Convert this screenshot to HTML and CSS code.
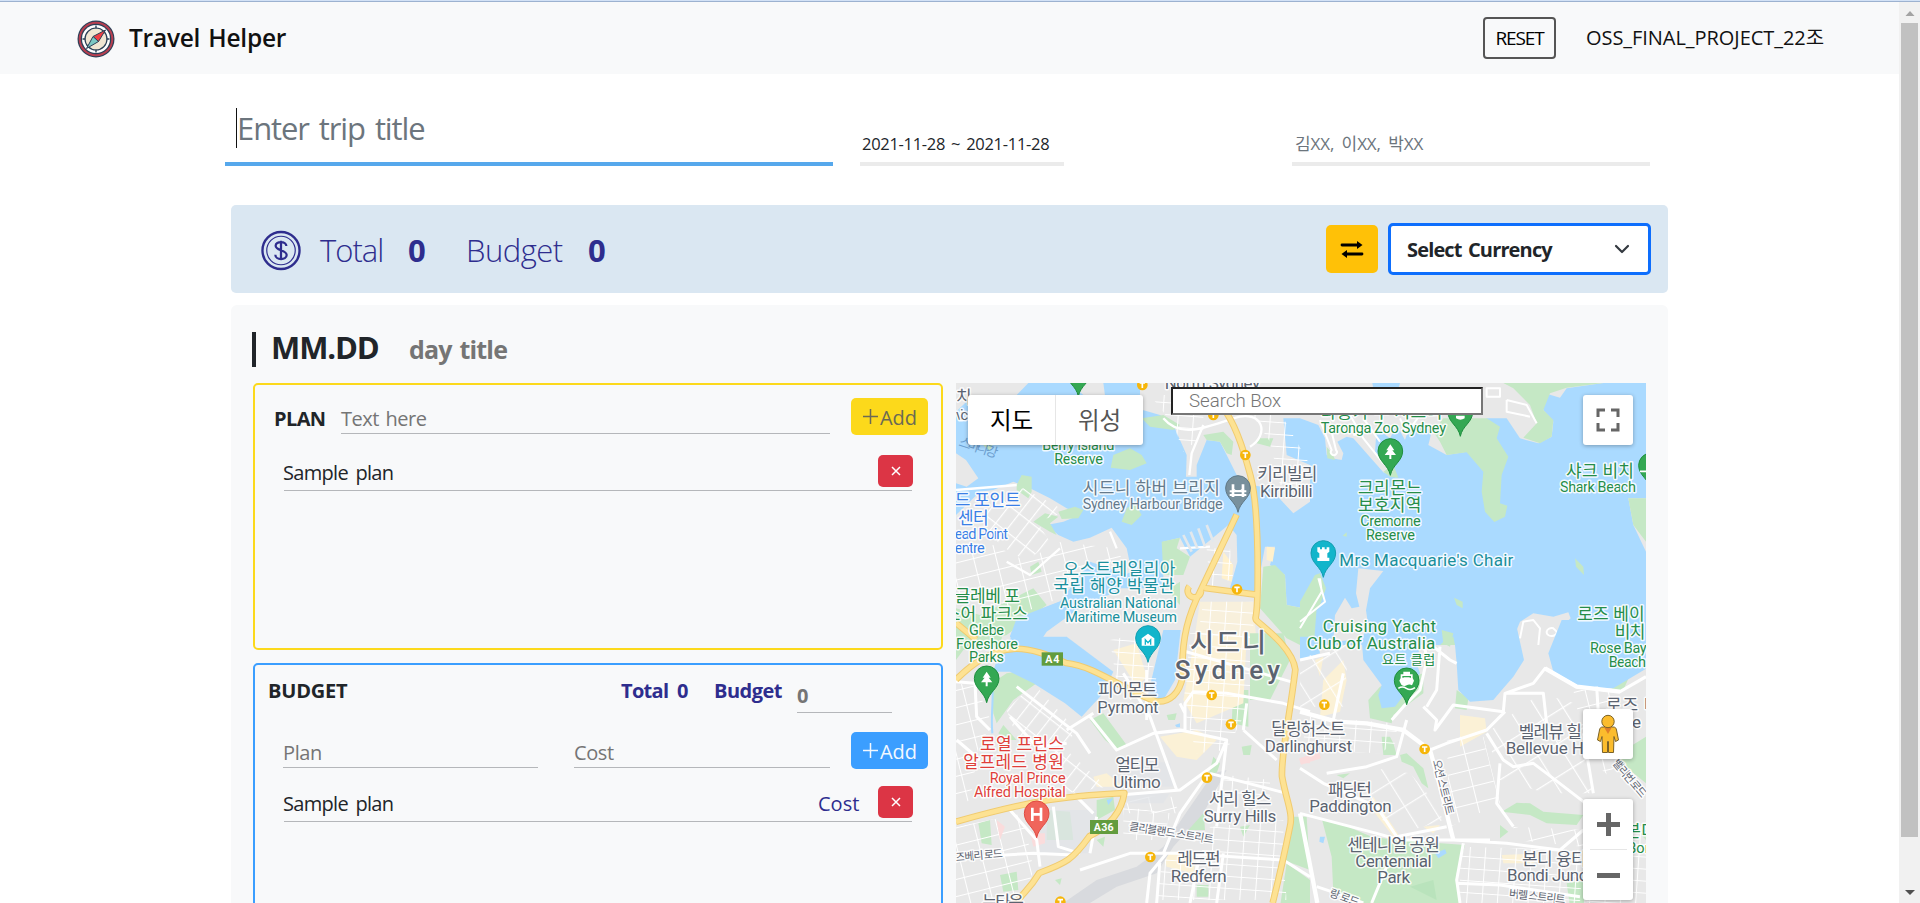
FILE: index.html
```html
<!DOCTYPE html>
<html lang="ko">
<head>
<meta charset="utf-8">
<title>Travel Helper</title>
<link rel="stylesheet" href="styles.css">
</head>
<body>
<div class="edge"></div>
<div class="window">
  <div class="page">
    <header class="navbar">
      <svg class="logo" viewBox="0 0 38 38">
        <circle cx="19" cy="19" r="18.5" fill="#2b4057"/><circle cx="19" cy="19" r="16.3" fill="none" stroke="#b83f50" stroke-width="2"/>
        <circle cx="19" cy="19" r="14" fill="#fff"/><circle cx="19" cy="19" r="11" fill="#f0e6d3" stroke="#2b4057" stroke-width="1.2"/>
        <path d="M19 5.500v3M19 29.500v3M5.500 19h3M29.500 19h3" stroke="#2b4057" stroke-width="1.4"/>
        <path d="M28.500 10 16 16.500 21.500 21.500Z" fill="#ee3e45" stroke="#2b4057" stroke-width="1"/>
        <path d="M9.500 28.500 16 16.500 21.500 21.500Z" fill="#7cc8c4" stroke="#2b4057" stroke-width="1"/>
      </svg>
      <span class="brand">Travel Helper</span>
      <button class="reset"><span>RESET</span></button>
      <span class="team">OSS_FINAL_PROJECT_22조</span>
    </header>

    <section class="trip">
      <div class="field trip-title"><i class="caret"></i><span>Enter trip title</span></div>
      <div class="field dates"><span>2021-11-28 ~ 2021-11-28</span></div>
      <div class="field members"><span>김XX, 이XX, 박XX</span></div>
    </section>

    <section class="summary">
      <svg class="coin" viewBox="0 0 41 41" fill="none" stroke="#2e2d8e">
        <circle cx="20.500" cy="20.500" r="19" stroke-width="2.400"/><circle cx="20.500" cy="20.500" r="14.600" stroke-width="1.200"/>
        <path d="M26 16c0-5.500-11-5.500-11-.4 0 5.300 11.300 4 11.300 9.600 0 5.500-11.600 5.500-11.600-.4M20.500 10.500v20" stroke-width="2.300"/>
      </svg>
      <span class="sum-label total">Total</span><b class="sum-value">0</b>
      <span class="sum-label budget-l">Budget</span><b class="sum-value">0</b>
      <button class="swap"><svg viewBox="0 0 24 24" width="24" height="24"><path d="M2 8h15M7 17h15" stroke="#000" stroke-width="2.800" stroke-linecap="round"/><path d="M17 4 22.500 8 17 12ZM7 13 1.500 17 7 21Z"/></svg></button>
      <div class="select"><b>Select Currency</b><svg width="16" height="10" viewBox="0 0 16 10"><path d="m2 2 6 6 6-6" fill="none" stroke="#343a40" stroke-width="2.200" stroke-linecap="round" stroke-linejoin="round"/></svg></div>
    </section>

    <section class="day">
      <div class="day-head"><i class="bar"></i><b class="date">MM.DD</b><b class="day-title">day title</b></div>
      <div class="columns">
        <div class="left">
          <div class="card plan">
            <div class="row entry">
              <b class="heading">PLAN</b>
              <div class="line text-here"><span>Text here</span></div>
              <button class="add yellow"><svg width="17" height="17"><path d="M8.500 1v15M1 8.500h15" stroke="currentColor" stroke-width="1.500"/></svg><span>Add</span></button>
            </div>
            <div class="row item"><span class="sample">Sample plan</span><button class="remove"><svg width="10" height="10"><path d="m1 1 8 8M9 1 1 9" stroke="#fff" stroke-width="1.500"/></svg></button></div>
          </div>
          <div class="card budget">
            <div class="row budget-head">
              <b class="heading">BUDGET</b><b class="t1">Total</b><b class="v1">0</b><b class="t2">Budget</b><div class="line amount"><b>0</b></div>
            </div>
            <div class="row entry2">
              <div class="line in-plan"><span>Plan</span></div>
              <div class="line in-cost"><span>Cost</span></div>
              <button class="add blue"><svg width="17" height="17"><path d="M8.500 1v15M1 8.500h15" stroke="currentColor" stroke-width="1.500"/></svg><span>Add</span></button>
            </div>
            <div class="row item second"><span class="sample">Sample plan</span><span class="cost">Cost</span><button class="remove"><svg width="10" height="10"><path d="m1 1 8 8M9 1 1 9" stroke="#fff" stroke-width="1.500"/></svg></button></div>
          </div>
        </div>

        <div class="map">
<svg class="tiles" viewBox="0 0 2070 1560" width="690" height="520">
<defs>
  <pattern id="ga" width="46" height="36" patternUnits="userSpaceOnUse" patternTransform="rotate(4)"><path d="M0 0H46M0 0V36" stroke="#fff" stroke-width="6"/></pattern>
  <pattern id="gb" width="38" height="66" patternUnits="userSpaceOnUse" patternTransform="rotate(38)"><path d="M0 0H38M0 0V66" stroke="#fff" stroke-width="7"/></pattern>
  <pattern id="gc" width="66" height="50" patternUnits="userSpaceOnUse" patternTransform="rotate(-14)"><path d="M0 0H66M0 0V50" stroke="#fff" stroke-width="6"/></pattern>
  <pattern id="gd" width="70" height="84" patternUnits="userSpaceOnUse" patternTransform="rotate(-32)"><path d="M0 0H70M0 0V84" stroke="#fff" stroke-width="7"/></pattern>
  <path id="pin" d="M0 0C-6-32-37-42-37-73A37 37 0 0 1 37-73C37-42 6-32 0 0Z"/>
  <g id="tt"><circle r="16" fill="#f6b60b"/><path d="M-8-6H8M0-6V9" stroke="#fff" stroke-width="5" fill="none"/></g>
  <path id="tree" d="M0-24-12-6h6L-17 8h14v12h6V8h14L6-6h6Z" fill="#fff"/>
</defs>
<rect width="2070" height="1560" fill="#aadaff"/>
<!-- land, north-west -->
<g transform="translate(-18 -24)">
  <g fill="#e8e8e8">
    <path d="M18 24H235L200 60 60 70 18 110ZM360 24H460L470 100H570V24H1060V60L1000 130 1010 240 1080 270V380L1030 415 960 340 905 330 860 300 830 240 810 200 770 195 740 270 740 305 708 305 710 240 670 150 630 120 560 100 500 60 400 60Z"/>
    <path d="M18 235 48 255 85 310 50 335 18 325ZM18 420 90 350 130 345 190 320 240 340 300 370 350 400 390 420 340 440 290 450 325 480 370 500 420 488 485 458 530 520 545 590 500 610 420 560 330 680 200 730 180 785 200 810H18Z"/>
    <path d="M290 770 470 640 640 640V500L690 488 720 545 835 450 860 480 862 560 840 640 920 650 945 515 975 515 960 570 1005 600 1010 690 1060 700 1090 660V830H250Z"/>
  </g>
  <g fill="#c5e8c5">
    <path d="M490 240 540 220 575 240 590 265 540 285 482 278ZM200 330 215 300 245 305 245 350 235 370 200 345ZM250 440 285 415 325 425 300 445 320 480 300 470ZM325 410 375 395 400 405 385 430 335 432ZM530 400 555 385 575 420 545 450 515 440ZM635 500 690 488 680 520 720 545 700 600 640 600ZM940 575 975 570 1005 600 1010 690 1060 700 1080 660 1100 700 1090 830 1010 790 930 700ZM90 200 135 185 120 230ZM575 130 640 120 690 150 670 165 600 155ZM930 190 970 190 960 215 920 205ZM760 180 820 170 850 200 845 240 830 235 810 200 770 195ZM240 575 265 560 275 590 245 600ZM660 640 690 620 690 690 670 670Z"/>
    <path d="M18 700 90 720 250 640 290 690 170 780 60 810H18Z"/>
  </g>
  <path d="M180 785 200 730 340 675 420 560 540 600 500 650 400 690 300 760 230 810Z" fill="#aadaff"/>
  <path d="M950 515 975 518 968 560 950 555ZM820 530 850 570 845 620 815 610Z" fill="#fff1cd"/>
  <path d="M750 680 910 680 920 810H730Z" fill="#f8f0dc"/>
  <path d="M120 370 220 340 350 410 260 440 300 500 230 560 150 510 100 440Z" fill="url(#gb)"/>
  <path d="M18 540 130 510 230 560 320 500 500 520 520 560 420 560 330 670 200 720 100 640 18 680Z" fill="url(#gc)"/>
  <path d="M600 60H760V180L700 230 670 150ZM860 50H1000V130L1080 270V350L990 330 960 200Z" fill="url(#ga)"/>
  <path d="M770 520H840L850 610 780 640ZM760 680H910V810H740Z" fill="url(#ga)"/>
  <g fill="none" stroke="#fff" stroke-width="7" stroke-linejoin="round"><path d="M640 130C690 190 760 160 850 130S960 180 900 215M718 300 725 235 760 150M690 520 780 515M480 470 500 520M170 560 240 600 330 520M18 345 200 330"/></g>
  <path d="M700 480 725 530M722 470 742 520M745 460 765 515M770 450 790 500" stroke="#e3e8ec" stroke-width="8"/>
</g>
<!-- land, north-east -->
<g transform="translate(1032 -24)">
  <g fill="#e8e8e8">
    <path d="M-60 24H910L800 40 780 68 720 50 730 105 760 140 755 185 715 205 660 190 620 130 560 130 500 230 440 240 385 210 395 170 370 150 330 150 315 195 290 150 270 190 230 160 225 230 270 285 290 308 250 292 160 190 140 185 112 200 130 235 125 255 95 250 80 240 75 190 55 150 0 130H-60Z"/>
    <path d="M985 370H1038V530L1000 450ZM175 580 250 588 210 640 198 706 210 790 100 800 105 720 135 668 155 700 178 695 168 655ZM640 790 660 740 700 715 760 725 805 712 812 730 780 760 785 830H650Z"/>
  </g>
  <g fill="#c5e8c5">
    <path d="M610 24H910L800 38 750 55 730 105 760 135 755 185 720 205 670 188 710 145 690 90 640 40ZM400 170 430 130 560 130 600 155 590 190 625 245 605 300 600 385 622 392 615 425 583 441 555 410 545 350 550 290 500 232 440 240 420 200ZM985 370H1038V500L1000 450ZM60 595 78 640 60 690 0 740V680L45 600ZM825 550 850 575 852 600 828 575ZM462 668 488 680 488 700 470 690ZM128 482 140 472 140 485ZM80 215 100 240 105 255 82 250ZM430 800 460 785 470 830 400 830ZM250 290 280 270 295 308 270 305Z"/>
  </g>
  <path d="M217 24H300L290 60 220 40Z" fill="#aadaff"/>
  <g fill="none" stroke="#fff" stroke-width="6" stroke-linejoin="round"><path d="M95 80 100 140M60 135 95 225A9 9 0 1 0 108 225L90 150M150 120 190 190 250 265M190 130 240 200M160 180 210 170M560 40H600V65H560ZM620 75 680 90 710 145M620 75V110L690 125M660 790 670 740 700 735 720 760 715 810M760 760A15 12 0 1 0 770 770ZM55 610 75 680 0 740M60 610 65 650 0 760M0 110 160 120M300 130 320 175 360 120"/></g>
</g>
<!-- land, south -->
<rect x="0" y="786" width="2070" height="774" fill="#e8e8e8"/>
<g transform="translate(-18 771)">
  <g fill="#c5e8c5">
    <path d="M18-30H160L150 20 40 30 18 60ZM125 130 170 100 235 90 260 130 190 180 140 250 130 220ZM420 240 460 220 530 315 500 328 465 300ZM145 280 160 255 200 300 170 300ZM290 510 360 515 370 600 290 600ZM440 480 490 470 495 510 440 540ZM85 550 120 540 125 615 95 610ZM150 705 200 695 205 750 160 755ZM440 600 465 590 460 620ZM650 225 680 220 675 240 655 240ZM790 350 810 370 800 400 775 410ZM850 150 895 150 895 260 845 250ZM900-20 1000-20 1020 60 960 180 900 180ZM700 570 760 500 765 570ZM870 560 900 555 880 590ZM1030 530 1070 530 1080 690 1000 660ZM1010 670 1080 720V800H990ZM740 735 775 735 775 770 740 770ZM315 720 335 715 330 735ZM875 320 905 315 900 345 880 345Z"/>
  </g>
  <path d="M185-10 350-10 490 95 455 165 395 230 345 190 250 130 180 95H130L140 60Z" fill="#aadaff"/>
  <path d="M350 100 400 140M590 180 640-30H692L675 120 640 180ZM675 255 690 250 690 262 680 262ZM470 480 490 475 475 495Z" fill="#aadaff"/>
  <path d="M735-10H890L880 190 740 250 700 180ZM630 290 740 270 800 300 740 360 680 350ZM490 30 560 10 590 110 560 140ZM640 640 740 640 730 700 650 680ZM430 410 470 400 520 440 440 440Z" fill="#fbf1d6"/>
  <path d="M480 0 580-20 620 110 600 180 540 180 500 130ZM720-20H900V190L830 330 740 340 700 200ZM520 500 660 520 640 600 520 600ZM780 560 1000 540 1000 660 1010 780H620L640 640 750 650ZM780 400 960 420 960 480H790Z" fill="url(#ga)"/>
  <path d="M170 210 250 130 370 260 360 340 470 440 350 460 340 400 200 290Z" fill="url(#gb)"/>
  <path d="M18 130 80 140 130 260 90 300 60 480 18 500ZM18 560 220 520 250 690 220 789H18ZM520 470H680V520H520Z" fill="url(#gc)"/>
  <path d="M270 510H440L420 640 270 640ZM520 460H660L640 490H520ZM510 350 660 370 670 440H520Z" fill="#e1e4e8" opacity=".7"/>
  <path d="M340 789 440 720 560 680 640 620 700 530 790 400 830 390 760 520 670 620 620 700 500 740 420 789Z" fill="#d8dade"/>
  <path d="M140 540 165 560 150 600ZM240 580 285 580 285 610 250 620ZM1050 370 1080 350V370Z" fill="#fadcdc"/>
  <path d="M127 280C120 200 140 150 115 110" stroke="#aadaff" stroke-width="6" fill="none"/>
  <g fill="none" stroke="#fff" stroke-width="9" stroke-linejoin="round">
    <path d="M18 125 75 130 80 230 120 270M350 270 430 220M420 230 500 330 610 280 705 270V190L730 155 830 160 1000 190 1080 215M520 100 600 230 680 450M590 90V240M690 190 705 220M610 280 690 270 830 300 800 370 690 450 510 465M890 190 880 270M830 300 800 560M180 510 260 600 270 680M80 650 250 640 370 645M390 690 540 640 650 640 600 700 590 789M640 640 690 520 760 420M600 640 680 640 1000 660 1080 710M780 400 1010 460M310 500 325 620 390 640M440 530 420 640M370 460 430 520M180 230 260 320 350 310M690 30 1040 130M200 140 380 280 420 340M880 270 980 360M20 300 90 360M630 660 620 789M750 640 720 789M820 640 800 789"/>
  </g>
</g>
<g transform="translate(1032 771)">
  <g fill="#c5e8c5">
    <path d="M205 180 240 140 370 100 370 160 280 225 275 250 210 235ZM470 150 505 175 500 210 465 205ZM425-30 460-20 450 20 430 10ZM300 345 320 340 370 385 385 445 365 430 340 380 305 365ZM245 290 270 290 280 310 290 345 250 345ZM65 535 120 550 215 590 290 600 495 615 470 700 480 800H215L100 760 95 650ZM605 515 650 488 690 490 730 515 850 525 830 555 740 550 690 525ZM600 555 625 575 600 595ZM800 730 860 720 850 800H810ZM935 130 965 95 990 105 970 150H935ZM940 350 1038 290V430ZM110 405 150 400 130 415ZM1010 570 1038 570V600Z"/>
  </g>
  <path d="M330 740 400 720 410 780Z" fill="#b9e3bc"/>
  <path d="M185 0 200-40H370L350 70 360 100 285 200 245 205 235 165 245 135 190 60ZM460-40H650L672 60 640 110 610 145 580 180 510 185 475 150 470 70ZM785-60H1040V85L940 145H850L760 95 745 40ZM0-10 50-10 60 40 0 60ZM60 590 75 590 70 610 58 605ZM405 640 435 628 440 640 415 655Z" fill="#aadaff"/>
  <path d="M70 120 130 60 140 120 120 215 60 230ZM480 225 555 235 560 275 480 320ZM605 645 720 640 700 670 610 670ZM45 60 70 50 60 110ZM370 560 420 555 400 580ZM220 470 300 590 280 590 210 500Z" fill="#fbf1d6"/>
  <path d="M0 50 70 40 150-20 130 200 0 200ZM190 380 330 400 390 470 430 540 290 585 210 500Z" fill="url(#gd)" opacity=".9"/>
  <path d="M30 230 280 250 300 300 240 340 0 330ZM480 620 850 630 840 789H480ZM860 540 1038 560V789H860Z" fill="url(#ga)"/>
  <path d="M560 280 720 160 860 200 880 460 740 460 600 420Z" fill="url(#gd)"/>
  <path d="M440 290 550 290 600 490 450 560ZM640 560 860 570 850 620 640 600ZM820 150H940V420L860 350Z" fill="url(#gc)"/>
  <path d="M0 365 60 345" stroke="#fadcdc" stroke-width="20"/>
  <g fill="none" stroke="#fff" stroke-width="9" stroke-linejoin="round">
    <path d="M275 240 310 200 360 150 380 60 370-10M370 200 410 240 405 270 460 195 610 215 615 160 700 130 735 85 830 140 960 155 1038 110M615 215 560 270 440 310 390 330M400 20 450 60 470 70M380 200 410 150 420 20M615 160H730L740 250M560 280 610 360 640 380 700 370 740 400 870 500M320 240 290 350 200 380 80 400M0 385 70 430 230 500 290 590 440 560M0 60 90 40M130 100 100 240M890 140 900 300M460 600 620 610 780 630 850 570M300 600 470 600 570 600M490 610 470 720 480 789M470 730 600 735 840 770M0 520 230 580 300 600M50 740 110 760 190 789M260 680 215 789M850 280 880 460M600 370 590 490 640 560"/>
    <path d="M0 215 110 245 200 250 310 270 390 330 410 400 460 600M0 520 52 789M735 85 830 140 960 155" stroke-width="13"/>
  </g>
</g>
<!-- motorways -->
<g fill="none" stroke-linejoin="round">
  <path d="M812 90C850 150 870 230 884 280C902 350 906 480 905 600S895 700 900 710S1010 790 1018 860C1000 1010 975 1110 978 1180C990 1250 1012 1290 1002 1330C990 1390 975 1460 950 1560M842 395 735 620C700 690 675 760 680 880C672 930 640 960 600 955C500 920 420 850 330 840C220 790 130 760 0 890M745 615 900 635M700 610A20 20 0 1 0 735 625M0 1316C200 1260 300 1240 505 1230C495 1300 440 1340 400 1360C350 1430 330 1440 250 1470C220 1520 200 1530 180 1560M0 720 60 770" stroke="#f0cb70" stroke-width="20"/>
  <path d="M812 90C850 150 870 230 884 280C902 350 906 480 905 600S895 700 900 710S1010 790 1018 860C1000 1010 975 1110 978 1180C990 1250 1012 1290 1002 1330C990 1390 975 1460 950 1560M842 395 735 620C700 690 675 760 680 880C672 930 640 960 600 955C500 920 420 850 330 840C220 790 130 760 0 890M745 615 900 635M700 610A20 20 0 1 0 735 625M0 1316C200 1260 300 1240 505 1230C495 1300 440 1340 400 1360C350 1430 330 1440 250 1470C220 1520 200 1530 180 1560M0 720 60 770" stroke="#fde293" stroke-width="14"/>
</g>
<!-- labels and pins -->
<g class="lb" transform="translate(-18 -24)">
  <text x="18" y="84" class="k gray" textLength="34">치</text><text x="18" y="134" class="gray s" textLength="36">vic</text>
  <text x="644" y="42" class="l gray" textLength="286">North Sydney</text>
  <text x="24" y="212" class="river" transform="rotate(18 24 212)" textLength="120">스마나 강</text>
  <text x="277" y="226" class="s green" textLength="216">Berry Island</text><text x="313" y="266" class="s green" textLength="146">Reserve</text>
  <text x="398" y="358" class="k slate" textLength="412">시드니 하버 브리지</text><text x="398" y="403" class="s slate" textLength="420">Sydney Harbour Bridge</text>
  <text x="922" y="316" class="k gray" textLength="180">키리빌리</text><text x="930" y="366" class="l gray" textLength="158">Kirribilli</text>
  <text x="14" y="394" class="k blue" textLength="198">드 포인트</text><text x="24" y="446" class="k blue" textLength="92">센터</text><text x="14" y="493" class="s blue" textLength="160">ead Point</text><text x="14" y="534" class="s blue" textLength="90">entre</text>
  <text x="340" y="600" class="k teal" textLength="336">오스트레일리아</text><text x="310" y="652" class="k teal" textLength="364">국립 해양 박물관</text><text x="330" y="700" class="s teal" textLength="350">Australian National</text><text x="346" y="740" class="s teal" textLength="335">Maritime Museum</text>
  <text x="14" y="682" class="k green" textLength="196">글레베 포</text><text x="-16" y="734" class="k green" textLength="250">쇼어 파크스</text><text x="57" y="780" class="s green" textLength="105">Glebe</text>
</g>
<g class="lb" transform="translate(1032 -24)">
  <text x="62" y="130" class="k green" textLength="365">타롱가 주 시드니</text><text x="62" y="173" class="s green" textLength="376">Taronga Zoo Sydney</text>
  <text x="174" y="356" class="k green" textLength="192">크리몬느</text><text x="174" y="408" class="k green" textLength="190">보호지역</text><text x="181" y="454" class="s green" textLength="181">Cremorne</text><text x="198" y="495" class="s green" textLength="147">Reserve</text>
  <text x="118" y="573" class="l teal" textLength="522">Mrs Macquarie's Chair</text>
  <text x="798" y="306" class="k green" textLength="204">샤크 비치</text><text x="780" y="352" class="s green" textLength="228">Shark Beach</text>
  <text x="68" y="771" class="l green" textLength="340">Cruising Yacht</text><text x="20" y="822" class="l green" textLength="386">Club of Australia</text>
  <text x="832" y="736" class="k green" textLength="202">로즈 베이</text><text x="944" y="788" class="k green" textLength="92">비치</text>
</g>
<g class="lb" transform="translate(-18 771)">
  <text x="18" y="26" class="s green" textLength="186">Foreshore</text><text x="57" y="67" class="s green" textLength="105">Parks</text>
  <text x="720" y="36" class="kc gray" textLength="228">시드니</text><text x="674" y="116" class="city gray" textLength="316">Sydney</text>
  <text x="444" y="169" class="k gray" textLength="178">피어몬트</text><text x="442" y="220" class="l gray" textLength="184">Pyrmont</text>
  <text x="496" y="394" class="k gray" textLength="132">얼티모</text><text x="490" y="444" class="l gray" textLength="142">Ultimo</text>
  <text x="964" y="285" class="k gray" textLength="222">달링허스트</text><text x="944" y="335" class="l gray" textLength="262">Darlinghurst</text>
  <text x="776" y="496" class="k gray" textLength="188">서리 힐스</text><text x="761" y="545" class="l gray" textLength="218">Surry Hills</text>
  <text x="90" y="330" class="k red" textLength="252">로열 프린스</text><text x="40" y="384" class="k red" textLength="302">알프레드 병원</text><text x="119" y="430" class="s red" textLength="228">Royal Prince</text><text x="72" y="471" class="s red" textLength="275">Alfred Hospital</text>
  <text x="682" y="676" class="k gray" textLength="130">레드펀</text><text x="662" y="725" class="l gray" textLength="168">Redfern</text>
  <text x="536" y="570" class="ks gray" transform="rotate(9 536 570)" textLength="256">클리블랜드 스트리트</text>
  <text x="18" y="664" class="ks gray" transform="rotate(-5 18 664)" textLength="142">즈베리 로드</text>
  <text x="96" y="804" class="k gray" textLength="126">뉴타운</text>
</g>
<g class="lb" transform="translate(1032 771)">
  <text x="246" y="73" class="km green" textLength="160">요트 클럽</text>
  <text x="870" y="39" class="s green" textLength="170">Rose Bay</text><text x="926" y="80" class="s green" textLength="112">Beach</text>
  <text x="918" y="212" class="k gray" textLength="210">로즈 베이</text><text x="996" y="264" class="l gray" textLength="80">e B</text>
  <text x="656" y="294" class="k gray" textLength="190">벨레뷰 힐</text><text x="617" y="343" class="l gray" textLength="270">Bellevue Hill</text>
  <text x="84" y="468" class="k gray" textLength="132">패딩턴</text><text x="28" y="517" class="l gray" textLength="247">Paddington</text>
  <text x="142" y="632" class="k gray" textLength="278">센테니얼 공원</text><text x="166" y="681" class="l gray" textLength="229">Centennial</text><text x="232" y="729" class="l gray" textLength="98">Park</text>
  <text x="666" y="674" class="k gray" textLength="194">본디 융티</text><text x="621" y="722" class="l gray" textLength="242">Bondi Junc</text>
  <text x="398" y="362" class="ks gray" transform="rotate(76 398 362)" textLength="170">오션 스트리트</text>
  <text x="626" y="772" class="ks gray" transform="rotate(6 626 772)" textLength="170">버렐 스트리트</text>
  <text x="86" y="768" class="ks gray" transform="rotate(20 86 768)" textLength="92">랑 로드</text>
  <text x="936" y="370" class="ks gray" transform="rotate(50 936 370)" textLength="138">밸리번 로드</text>
  <text x="976" y="590" class="k green">본디</text><text x="982" y="640" class="s green">Bondi</text>
</g>
<g stroke-width="3">
  <g fill="#34a853" stroke="#1e8e3e"><use href="#pin" x="367" y="40"/><use href="#pin" x="1303" y="277"/><use href="#pin" x="1513" y="160"/><use href="#pin" x="2085" y="320"/><use href="#pin" x="92" y="959"/><use href="#pin" x="1352" y="965"/></g>
  <g fill="#12b5cb" stroke="#129eaf"><use href="#pin" x="1102" y="583"/><use href="#pin" x="576" y="838"/></g>
  <use href="#pin" x="846" y="388" fill="#78909c" stroke="#5f7886"/><use href="#pin" x="242" y="1364" fill="#f0655b" stroke="#e04a40"/>
</g>
<use href="#tree" x="1303" y="208"/><use href="#tree" x="92" y="890"/>
<path d="M1084 493h8v6h6v-6h8v6h6v-6h8v13l-6 5v13h6v10h-36v-10h6v-13l-6-5Z" fill="#fff"/>
<path d="M821 325h50M821 336h50" stroke="#fff" stroke-width="6"/><path d="M831 304v38M861 304v38" stroke="#fff" stroke-width="8"/><path d="M831 318Q846 330 861 318" stroke="#fff" stroke-width="4" fill="none"/>
<path d="M557 766 576 752 595 766V788H557ZM1500 98h26v8q-13 8-26 0ZM1330 893 1334 885V874h8v-8h20v8h8v11l4 8-6 14q-8-5-16 0t-16-2Z" fill="#fff"/><path d="M568 785V770L576 779 584 770V785" stroke="#12b5cb" stroke-width="4" fill="none"/><path d="M1341 884v-3h22v3" stroke="#34a853" stroke-width="4" fill="none"/><path d="M1327 916q12-8 24 0t26-2M2070 265h-18" stroke="#fff" stroke-width="5" fill="none"/>
<path d="M229 1274v40M255 1274v40M229 1294h26" stroke="#fff" stroke-width="8"/>
<use href="#tt" x="559" y="6"/><use href="#tt" x="772" y="96"/><use href="#tt" x="868" y="216"/><use href="#tt" x="843" y="619"/><use href="#tt" x="767" y="936"/><use href="#tt" x="825" y="1024"/><use href="#tt" x="753" y="1184"/><use href="#tt" x="583" y="1422"/><use href="#tt" x="313" y="1556"/><use href="#tt" x="1105" y="965"/><use href="#tt" x="1406" y="1098"/>
<rect x="257" y="808" width="64" height="40" fill="#629c3e"/><text x="268" y="839" class="road" textLength="42">A4</text>
<rect x="402" y="1311" width="84" height="42" fill="#629c3e"/><text x="413" y="1343" class="road" textLength="60">A36</text>
</svg>
          <div class="map-type"><span class="on">지도</span><span class="off">위성</span></div>
          <div class="search"><span>Search Box</span></div>
          <div class="ctl full"><svg width="24" height="24"><path d="M2 9V2h7M15 2h7v7M22 15v7h-7M9 22H2v-7" fill="none" stroke="#666" stroke-width="3"/></svg></div>
          <div class="ctl man"><svg width="24" height="40" viewBox="0 0 24 40"><path d="M7 13h10c2.500 0 3 1 3.500 3l2 10-3 1.500-1.500-5-.5 16h-5v-11h-1v11h-5l-.5-16-1.500 5-3-1.500 2-10c.5-2 1-3 3.500-3Z" fill="#fbbc2d" stroke="#7a6228" stroke-width="1"/><path d="M8 13h8l-4 7Z" fill="#e07f29"/><circle cx="12" cy="7.500" r="6.200" fill="#fbbc2d" stroke="#7a6228"/></svg></div>
          <div class="ctl zoom"><svg width="50" height="101"><path d="M14 25.500h23M25.500 14v23M14 76.500h23" stroke="#666" stroke-width="5"/><path d="M7 50.500h37" stroke="#e6e6e6"/></svg></div>
        </div>
      </div>
    </section>
  </div>
  <div class="scroll"><svg width="21" height="21"><path d="M6.500 14h9L11 9Z" fill="#a3a3a3"/></svg><div class="thumb"></div><svg class="down" width="21" height="21"><path d="M6 8h10l-5 5Z" fill="#505050"/></svg></div>
</div>
</body>
</html>
```
FILE: styles.css
```css
* { box-sizing: border-box; }
body { margin: 0; height: 903px; overflow: hidden; background: #fff; color: #212529; font-family: "Open Sans", "Noto Sans CJK KR", sans-serif; font-size: 20px; line-height: 30px; }
button { border: 0; padding: 0; font: inherit; color: inherit; background: none; display: flex; align-items: center; justify-content: center; }
span, b { white-space: pre; }
b { font-weight: 700; }
.edge { height: 2px; background: #d3e2f6; border-bottom: 1px solid #9db2d0; }
.window { display: flex; height: 901px; }
.page { width: 1899px; overflow: hidden; }
.scroll { width: 21px; background: #f1f1f1; padding: 0 2px 0 2px; display: flex; flex-direction: column; }
.scroll svg { display: block; flex: none; margin-left: -2px; }
.thumb { height: 814px; background: #c1c1c1; }
.scroll .down { margin-top: 45px; }

.navbar { height: 72px; background: #f8f9fa; display: flex; align-items: center; padding: 0 76px 0 77px; }
.logo { width: 38px; height: 38px; margin-top: 2px; }
.brand { font-weight: 600; font-size: 24.5px; color: #111; margin-left: 14px; letter-spacing: -.25px; word-spacing: 2px; width: 1340px; }
.reset { width: 73px; height: 42px; border: 2px solid #555; border-radius: 4px; color: #000; margin-left: auto; }
.reset span { font-size: 19px; letter-spacing: -1.1px; }
.team { margin-left: 30px; width: 237px; letter-spacing: -.05px; color: #111; }

.trip { height: 92px; margin: 0 248px 0 225px; display: flex; align-items: stretch; }
.field { border-bottom: 4px solid #ebebeb; display: flex; align-items: flex-end; }
.trip-title { width: 608px; border-color: #56a8ec; padding: 0 0 13px 11px; color: #6c757d; font-size: 31px; line-height: 42px; letter-spacing: -1.1px; word-spacing: 3px; }
.caret { width: 1px; height: 40px; background: #111; margin-bottom: 1px; }
.dates { width: 204px; margin-left: 27px; padding: 0 0 3px 2px; font-size: 16.5px; letter-spacing: -.3px; word-spacing: 2px; }
.members { width: 358px; margin-left: 228px; padding: 0 0 3px 3px; font-size: 17px; color: #6c757d; letter-spacing: -.1px; word-spacing: 3px; }

.summary { margin: 39px 0 0 231px; width: 1437px; height: 88px; background: #dae7f2; border-radius: 5px; display: flex; align-items: center; padding: 0 17px 0 30px; color: #2e2d8e; }
.coin { width: 40px; height: 41px; margin-top: 3px; }
.sum-label { font-size: 31px; font-weight: 300; padding-top: 2px; }
.sum-value { font-size: 31px; width: 18px; padding-top: 2px; }
.total { margin-left: 19px; width: 88px; letter-spacing: -1px; }
.budget-l { margin-left: 40px; width: 122px; letter-spacing: -.5px; }
.swap { width: 52px; height: 48px; border-radius: 5px; background: #ffc107; margin-left: auto; }
.select { margin-left: 10px; width: 263px; height: 52px; border: 3px solid #0d6efd; border-radius: 5px; background: #fff; color: #212529; display: flex; align-items: center; justify-content: space-between; padding: 0 18px 0 16px; }
.select b { letter-spacing: -.85px; word-spacing: 2px; padding-top: 2px; }

.day { margin: 12px 0 0 231px; width: 1437px; height: 700px; background: #f8f9fa; border-radius: 6px; padding-top: 27px; }
.day-head { display: flex; height: 51px; padding-left: 21px; align-items: flex-start; line-height: 36px; }
.bar { width: 4px; height: 35px; background: #212529; }
.day-head b { margin-top: -3px; }
.date { font-size: 31px; margin-left: 15px; width: 138px; font-weight: 700; letter-spacing: -1.1px; }
.day-title { font-size: 25px; color: #757575; font-weight: 700; padding-top: 2px; letter-spacing: -.8px; word-spacing: 2px; }
.columns { display: flex; gap: 13px; padding-left: 22px; }
.left { width: 690px; display: flex; flex-direction: column; gap: 13px; }
.card { border: 2px solid #fcd91b; border-radius: 5px; }
.plan { height: 267px; padding-top: 13px; }
.budget { height: 400px; border-color: #3b9eff; padding-top: 9px; }
.row { display: flex; }
.line { border-bottom: 1px solid #b5b7ba; color: #757575; }
.line span, .line b { display: inline-block; }
.entry { height: 38px; padding-left: 19px; }
.entry .heading { margin-top: 6px; width: 67px; letter-spacing: -.6px; }
.text-here { width: 489px; height: 36px; padding: 6px 0 0 0; letter-spacing: -.5px; word-spacing: 2px; }
.add { width: 77px; height: 37px; border-radius: 5px; gap: 1px; margin-left: 21px; }
.add svg { display: block; }
.add span { padding-top: 3px; }
.yellow { background: #fcd91b; color: #6b6a55; }
.blue { background: #3b9eff; color: #f2f8ff; }
.item { margin: 19px 0 0 29px; width: 628px; height: 36px; border-bottom: 1px solid #b5b7ba; }
.sample { padding-top: 3px; flex: 1; letter-spacing: -.7px; word-spacing: 3px; margin-left: -1px; }
.cost { padding-top: 3px; width: 40px; color: #2e2d8e; margin-right: 20px; }
.remove { width: 35px; height: 32px; border-radius: 5px; background: #dc3545; margin-right: -1px; }
.budget-head { height: 39px; padding-left: 13px; color: #2e2d8e; }
.budget-head > b { padding-top: 2px; }
.budget-head .heading { color: #212529; width: 353px; letter-spacing: -.2px; }
.t1 { width: 56px; letter-spacing: -.7px; }
.v1 { width: 37px; }
.t2 { width: 83px; letter-spacing: -.5px; }
.amount { width: 95px; padding-top: 7px; }
.entry2 { margin-top: 19px; padding-left: 28px; }
.entry2 .line { height: 36px; padding: 6px 0 0 0; letter-spacing: -.4px; }
.in-plan { width: 255px; }
.in-cost { width: 256px; margin-left: 36px; }
.second { margin-top: 17px; }

.map { position: relative; width: 690px; height: 620px; background: #e8e8e8; overflow: hidden; font-family: Roboto, "Noto Sans CJK KR", sans-serif; }
.tiles { display: block; }
.tiles text { font-family: Roboto, "Noto Sans CJK KR", sans-serif; }
.lb text { paint-order: stroke; stroke: #fff; stroke-width: 9px; stroke-linejoin: round; stroke-opacity: .85; }
.k { font-size: 51px; }
.km { font-size: 39px; }
.ks { font-size: 33px; }
.kc { font-size: 78px; font-weight: 500; }
.city { font-size: 78px; font-weight: 500; }
.l { font-size: 51px; }
.s { font-size: 43.5px; }
.road { font-size: 32px; font-weight: 700; fill: #fff; }
.gray { fill: #5b6370; }
.slate { fill: #647a8c; }
.green { fill: #258d49; }
.teal { fill: #1a8f9c; }
.blue { fill: #3b9eff; }
.lb .blue { fill: #3a7fe6; }
.lb .river { font-size: 40px; fill: #6d9ecf; stroke: none; }
.red { fill: #df3f3a; }
.map-type { position: absolute; left: 12px; top: 12px; width: 175px; height: 50px; background: #fff; border-radius: 3px; box-shadow: 0 1px 4px rgba(0,0,0,.3); display: flex; line-height: 48px; font-size: 23.5px; font-family: "Noto Sans CJK KR", sans-serif; }
.map-type span { flex: 1; text-align: center; }
.on { color: #000; border-right: 1px solid #e6e6e6; }
.off { color: #565656; }
.search { position: absolute; left: 215px; top: 4px; width: 312px; height: 28px; background: #fff; border: 2px solid #767676; border-top-color: #222; border-left-color: #222; padding-left: 16px; line-height: 24px; font-size: 18.7px; font-weight: 300; color: #757575; }
.ctl { position: absolute; left: 627px; width: 50px; background: #fff; border-radius: 3px; box-shadow: 0 1px 4px rgba(0,0,0,.3); display: flex; align-items: center; justify-content: center; }
.full { top: 12px; height: 50px; }
.man { top: 326px; height: 50px; }
.zoom { top: 416px; height: 101px; }
```
